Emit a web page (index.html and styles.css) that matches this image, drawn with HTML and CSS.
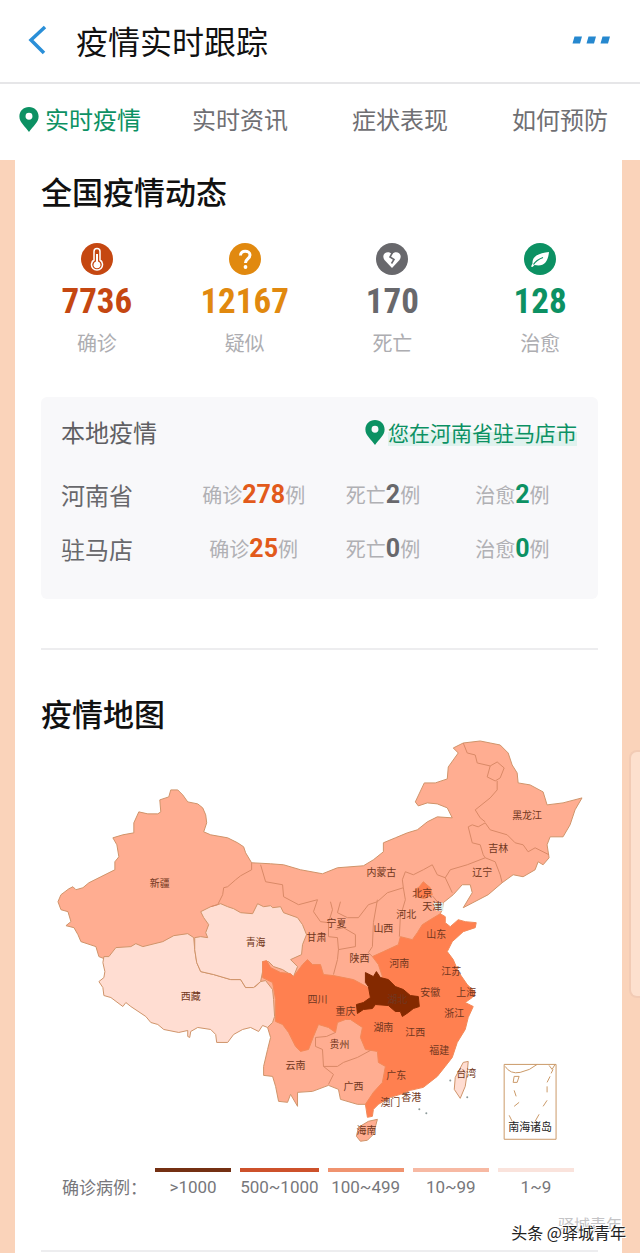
FILE: index.html
```html
<!DOCTYPE html>
<html lang="zh-CN">
<head>
<meta charset="utf-8">
<meta name="viewport" content="width=device-width, initial-scale=1">
<title>疫情实时跟踪</title>
<link rel="stylesheet" href="styles.css">
</head>
<body>
<svg class="defs" aria-hidden="true">
  <symbol id="pin" viewBox="0 0 20 26"><path fill="currentColor" fill-rule="evenodd" d="M10 0C4.300 0 0 4.300 0 9.800C0 16 6 20 10 26C14 20 20 16 20 9.800C20 4.300 15.700 0 10 0ZM10 6a3.600 3.600 0 1 1 0 7.200a3.600 3.600 0 0 1 0-7.200Z"/></symbol>
</svg>
<header class="topbar">
  <button class="icon-btn" aria-label="返回"><svg width="20" height="30" viewBox="0 0 20 30"><path d="M17 2L3 15L16 28" fill="none" stroke="#2a8fd8" stroke-width="3.500"/></svg></button>
  <h1 class="title">疫情实时跟踪</h1>
  <button class="icon-btn" aria-label="更多"><svg width="38" height="8" viewBox="0 0 38 8"><path fill="#2688cf" d="M2.500 0.500h7.500l-2 7H.500zM16.500 0.500h7.500l-2 7h-7.500zM30.500 0.500h7.500l-2 7h-7.500z"/></svg></button>
</header>
<nav class="tabs">
  <a class="tab tab-active" href="#live"><svg class="pin"><use href="#pin"/></svg>实时疫情</a>
  <a class="tab" href="#news">实时资讯</a>
  <a class="tab" href="#symptoms">症状表现</a>
  <a class="tab" href="#prevent">如何预防</a>
</nav>
<main class="card" id="live">
  <h2 class="heading">全国疫情动态</h2>
  <section class="stats">
    <div class="stat red">
      <svg class="badge" viewBox="0 0 32 32"><circle cx="16" cy="16" r="16" fill="currentColor"/><path d="M13 17V8.500a3 3 0 0 1 6 0V17a5.500 5.500 0 1 1-6 0z" fill="none" stroke="#fff" stroke-width="1.500"/><path d="M15 11h2v7.500a3.500 3.500 0 1 1-2 0z" fill="#fff"/></svg>
      <strong class="num">7736</strong><span class="name">确诊</span>
    </div>
    <div class="stat amber">
      <svg class="badge" viewBox="0 0 32 32"><circle cx="16" cy="16" r="16" fill="currentColor"/><path d="M11.500 12.500c0-6 9.500-5.500 9.500-.5c0 4-4.500 3.500-4.500 8" fill="none" stroke="#fff" stroke-width="3"/><circle cx="16.500" cy="24" r="1.900" fill="#fff"/></svg>
      <strong class="num">12167</strong><span class="name">疑似</span>
    </div>
    <div class="stat gray">
      <svg class="badge" viewBox="0 0 32 32"><circle cx="16" cy="16" r="16" fill="currentColor"/><path d="M16 25L8.500 17C4.500 11 11.500 6.500 16 11C20.500 6.500 27.500 11 23.500 17Z" fill="#fff"/><path d="M16.500 9.500L14 14l4 2.500l-2.500 4" fill="none" stroke="currentColor" stroke-width="1.600"/></svg>
      <strong class="num">170</strong><span class="name">死亡</span>
    </div>
    <div class="stat green">
      <svg class="badge" viewBox="0 0 32 32"><circle cx="16" cy="16" r="16" fill="currentColor"/><path d="M25 9C17 10 8 12 8.500 20.500L7 23.500l1.500.5l2-2C20 24 24 19 25 9Z" fill="#fff"/><path d="M9.500 21.500C12 17.500 15 16 19 14.500" fill="none" stroke="currentColor" stroke-width="1.200"/></svg>
      <strong class="num">128</strong><span class="name">治愈</span>
    </div>
  </section>
  <section class="local">
    <div class="local-head">
      <h3 class="local-title">本地疫情</h3>
      <a class="place" href="#place"><svg class="pin"><use href="#pin"/></svg><span class="place-name">您在河南省驻马店市</span></a>
    </div>
    <table class="cases">
      <tr><th scope="row">河南省</th><td>确诊<b class="orange">278</b>例</td><td>死亡<b class="gray">2</b>例</td><td>治愈<b class="green">2</b>例</td></tr>
      <tr><th scope="row">驻马店</th><td>确诊<b class="orange">25</b>例</td><td>死亡<b class="gray">0</b>例</td><td>治愈<b class="green">0</b>例</td></tr>
    </table>
  </section>
  <hr class="rule">
  <h2 class="heading">疫情地图</h2>
  <svg class="map" viewBox="40 738 558 408" role="img" aria-label="疫情地图">
    <path class="mid" d="M170 790L177 790L182 795L187 802L197 804L202 808L205 815L206 823L203 832L210 835L227 838L237 843L243 847L245 853L251 863L270 864L283 865L300 870L322 874L337 868L363 866L373 860L383 852L383 843L395 838L407 833L417 830L427 822L437 817L452 818L447 808L437 804L427 803L418 806L415 802L424 783L435 783L447 779L448 767L458 753L453 748L463 743L480 741L490 743L500 745L508 753L512 765L517 773L518 783L530 785L543 792L547 805L563 803L582 798L575 810L570 825L563 837L550 837L547 845L549 858L543 865L538 862L535 870L523 877L513 875L502 883L488 895L463 908L472 893L470 885L462 885L453 895L443 903L442 910L440 914L430 960L400 1060L373 1100L365 1105L357 1105L340 1100L338 1090L328 1086L312 1092L297 1093L297 1107L290 1095L287 1103L278 1102L275 1087L272 1077L263 1076L263 1067L267 1050L270 1038L267 1028L272 1010L200 960L103 959L98 957L95 947L80 942L77 935L73 928L65 926L70 922L67 912L60 910L57 902L60 895L68 889L72 887L75 890L82 888L88 883L100 877L114 870L114 862L118 857L116 845L112 838L122 835L133 833L133 823L138 812L147 814L157 814L160 812L159 800L168 797Z"/>
    <path class="pale" d="M103 957L108 957L115 948L130 947L135 944L142 947L162 942L173 936L187 934L193 938L194 950L196 963L200 972L213 975L230 980L240 980L245 988L255 987L260 982L265 981L272 990L273 1000L274 1017L272 1023L267 1028L262 1026L258 1032L250 1028L242 1030L233 1035L227 1043L216 1043L215 1035L210 1030L197 1028L190 1032L189 1038L187 1037L187 1031L178 1033L163 1030L157 1025L150 1023L145 1017L130 1007L125 1003L122 1007L110 998L103 996L102 988L98 982L103 978L104 972L102 963Z"/>
    <path class="pale" d="M200 912L210 907L220 904L227 907L233 909L240 913L252 914L257 904L263 907L270 906L272 908L280 907L283 913L297 918L302 925L306 935L302 945L301 955L290 960L297 967L293 977L282 970L273 967L268 962L262 962L262 972L260 982L253 988L245 988L240 980L230 980L213 975L200 972L196 963L194 950L194 938L200 937L207 938L205 933L208 925L203 918Z"/>
    <path class="strong" d="M262 962L266 961L270 968L280 973L290 974L293 977L302 965L307 960L312 965L320 965L323 975L333 976L353 980L368 988L382 977L378 965L372 957L383 952L398 945L400 937L412 940L417 933L422 925L430 920L440 914L445 917L445 923L450 927L458 920L465 922L476 923L475 928L463 932L452 942L447 952L453 960L458 972L467 985L475 993L472 998L465 1003L473 1007L468 1018L465 1030L457 1043L452 1058L445 1067L437 1077L423 1088L410 1091L400 1095L390 1098L378 1105L373 1110L372 1117L367 1118L365 1105L373 1093L382 1083L385 1067L378 1063L377 1052L365 1050L360 1038L362 1028L350 1020L345 1020L337 1023L335 1033L328 1028L318 1025L313 1037L308 1050L300 1052L295 1047L288 1033L282 1025L275 1022L275 1000L272 983L262 978Z"/>
    <path class="strong" d="M415 890L419 887L423 882L430 888L432 895L424 899L416 897Z"/>
    <path class="dark" d="M365 973L373 977L376 972L380 978L388 980L395 987L403 990L410 996L418 997L419 1007L413 1009L408 1013L402 1017L400 1012L395 1012L388 1006L375 1005L372 1009L363 1010L357 1014L356 1005L363 1003L370 998L368 987L365 983Z"/>
    <path class="border" d="M251 863L251 870L240 876L235 880L227 887L223 888L222 895L217 905L210 907M463 743L467 753L475 755L477 763L490 766L497 762L504 768L500 778L495 781L487 777L490 766M497 781L497 790L490 798L475 810L480 818L485 822M468 827L472 825L478 827L485 823L490 830L507 835L515 843L523 845L528 852L535 848L549 855M468 827L472 843L480 845L483 855L485 858L495 862L500 875L502 883M485 858L467 865L450 870L445 878L452 893M445 878L437 875L432 865L423 870L413 875L405 872L402 880L403 888L387 893L377 902L368 905L358 918L347 918L337 913L340 902M377 900L373 923L372 947L368 953L372 957M403 888L405 900L400 917L399 937M260 865L265 882L282 885L283 897L298 905L317 900L313 912L320 922L328 923L332 910L330 902M328 923L328 937L337 938L338 950L355 947L355 935L343 928L335 930M338 950L337 960L333 975M335 1033L326 1037L315 1038L315 1047L322 1050L323 1067L337 1067L343 1063L357 1058L370 1051M323 1067L333 1075L328 1085M432 896L438 903"/>
    <path class="mid" d="M377 1120L368 1122L358 1128L356 1137L360 1142L367 1141L373 1135Z"/>
    <path class="pale" d="M468 1062L463 1063L455 1078L454 1090L460 1099L465 1087L467 1073Z"/>
    <path class="sea" d="M433 903h10v8h-7z"/>
    <g class="islet"><circle cx="450" cy="1081" r="1"/><circle cx="467" cy="1098" r="1"/><circle cx="419" cy="1110" r="1"/><circle cx="426" cy="1114" r="1"/></g>
    <path class="inset" d="M504 1065H556V1140H504ZM505 1067Q510 1075 520 1073Q530 1071 537 1065M514 1077L519 1077L517 1083L513 1083ZM549 1066L552 1070L555 1065M553 1070L551 1074M550 1077L547 1083M547 1087V1093M547 1101L543 1107M539 1115L535 1122M514 1091L516 1097M519 1103L514 1107M509 1116L512 1122"/>
    <g class="labels">
      <text x="159" y="887">新疆</text><text x="255" y="946">青海</text><text x="190" y="1000">西藏</text><text x="316" y="941">甘肃</text><text x="336" y="927">宁夏</text><text x="381" y="876">内蒙古</text><text x="527" y="819">黑龙江</text><text x="498" y="852">吉林</text><text x="482" y="876">辽宁</text><text x="422" y="897">北京</text><text x="432" y="910">天津</text><text x="406" y="918">河北</text><text x="383" y="932">山西</text><text x="436" y="938">山东</text><text x="359" y="962">陕西</text><text x="399" y="967">河南</text><text x="451" y="975">江苏</text><text x="430" y="996">安徽</text><text x="466" y="996">上海</text><text x="397" y="1003">湖北</text><text x="317" y="1003">四川</text><text x="345" y="1015">重庆</text><text x="454" y="1018">浙江</text><text x="383" y="1032">湖南</text><text x="415" y="1037">江西</text><text x="439" y="1055">福建</text><text x="339" y="1049">贵州</text><text x="295" y="1070">云南</text><text x="353" y="1091">广西</text><text x="396" y="1080">广东</text><text x="390" y="1107">澳门</text><text x="411" y="1102">香港</text><text x="466" y="1078">台湾</text><text x="366" y="1135">海南</text><text class="inset-name" x="530" y="1132">南海诸岛</text>
    </g>
  </svg>
  <div class="legend">
    <span class="legend-title">确诊病例：</span>
    <ul class="scale">
      <li class="step step-1">&gt;1000</li><li class="step step-2">500~1000</li><li class="step step-3">100~499</li><li class="step step-4">10~99</li><li class="step step-5">1~9</li>
    </ul>
  </div>
  <hr class="rule">
</main>
<aside class="drawer"></aside>
<div class="mark mark-back">驿城青年</div>
<div class="mark">头条 @驿城青年</div>
</body>
</html>
```
FILE: styles.css
```css
* { box-sizing: border-box; }
body {
  position: relative;
  margin: 0;
  background: #fad3ba;
  color: #111;
  font-family: "Noto Sans CJK SC", sans-serif;
}
h1, h2, h3, ul { margin: 0; padding: 0; }
a { color: inherit; text-decoration: none; }
.defs { position: absolute; width: 0; height: 0; }

.topbar {
  display: flex;
  align-items: center;
  gap: 28px;
  height: 84px;
  padding: 0 30px 2px 28px;
  background: #fff;
  border-bottom: 2px solid #e6e6e8;
}
.icon-btn { display: flex; padding: 0; border: 0; background: none; }
.title { flex: 1; font-size: 32px; line-height: 48px; font-weight: 400; }

.tabs {
  display: grid;
  grid-template-columns: repeat(4, 1fr);
  height: 76px;
  background: #fff;
  color: #6f6f73;
}
.tab {
  display: flex;
  align-items: center;
  justify-content: center;
  gap: 6px;
  padding-bottom: 6px;
  font-size: 24px;
  line-height: 36px;
}
.tab-active { color: #0c9163; }
.pin { flex: none; width: 20px; height: 25px; }

.card { margin: 0 18px 0 15px; padding: 8px 24px 2px 26px; background: #fff; }
.heading { font-size: 31px; line-height: 46px; font-weight: 500; }

.stats {
  display: grid;
  grid-template-columns: repeat(4, 1fr);
  margin: 29px -16px 40px -18px;
}
.stat { display: flex; flex-direction: column; align-items: center; }
.badge { width: 32px; height: 32px; }
.num {
  font-family: "Liberation Sans Narrow", "Roboto Condensed", Roboto, sans-serif;
  font-size: 35px;
  line-height: 54px;
}
.name { color: #adadb1; font-size: 20px; line-height: 28px; }
.red { color: #c54711; }
.amber { color: #e1890f; }
.orange { color: #e25a1b; }
.gray { color: #68686c; }
.green { color: #0c9163; }

.local { padding: 17px 21px 24px 20px; border-radius: 6px; background: #f8f8fa; }
.local-head { display: flex; align-items: center; justify-content: space-between; margin-bottom: 17px; }
.local-title { color: #5f5f63; font-size: 24px; line-height: 36px; font-weight: 400; }
.place { display: flex; align-items: center; gap: 3px; color: #0c9163; font-size: 21px; line-height: 28px; }
.place-name { background: linear-gradient(transparent 50%, #e0f2ee 50%); }
.cases { width: 100%; table-layout: fixed; border-collapse: collapse; }
.cases th, .cases td { height: 54px; padding: 0; white-space: nowrap; }
.cases th { width: 128px; color: #68686c; font-size: 24px; font-weight: 400; text-align: left; }
.cases td { color: #b0b0b4; font-size: 20px; text-align: center; }
.cases b { font-family: Roboto, sans-serif; font-size: 25px; }

.rule { height: 2px; margin: 0; border: 0; background: #ededef; }
.local + .rule { margin: 49px 0 40px; }

.map { display: block; width: 100%; margin-top: 2px; margin-bottom: 23px; }
.mid, .pale, .strong, .dark { stroke: #cf9469; stroke-width: 1; stroke-linejoin: round; }
.mid { fill: #ffad91; }
.pale { fill: #ffddd2; }
.strong { fill: #ff8050; stroke: #f28a58; }
.dark { fill: #842900; stroke: #842900; }
.border { fill: none; stroke: #d98966; stroke-width: 1; }
.sea { fill: #d8ece8; }
.islet { fill: #8d9a9a; }
.inset { fill: none; stroke: #cb9a68; stroke-width: 1; }
.labels { fill: #713720; font-size: 10px; text-anchor: middle; }
.inset-name { fill: #222; font-size: 11px; }

.legend { display: flex; align-items: flex-end; padding: 0 24px 0 21px; margin-bottom: 50px; color: #77777b; }
.legend-title { flex: none; width: 93px; font-size: 17px; line-height: 26px; }
.scale { display: grid; flex: 1; grid-template-columns: repeat(5, 1fr); gap: 9px; list-style: none; }
.step {
  display: flex;
  justify-content: center;
  border-top: 4px solid;
  padding-top: 2px;
  font-size: 17px;
  line-height: 26px;
  font-family: Roboto, sans-serif;
}
.step-1 { border-color: #743013; }
.step-2 { border-color: #cd512b; }
.step-3 { border-color: #f0936f; }
.step-4 { border-color: #f7b9a3; }
.step-5 { border-color: #fae3dc; }

.drawer {
  position: absolute;
  top: 750px;
  right: 0;
  width: 11px;
  height: 248px;
  border: 2px solid #f2cbb5;
  border-right: 0;
  border-radius: 8px 0 0 8px;
  background: #fde0ce;
}
.mark {
  position: absolute;
  right: 14px;
  bottom: 10px;
  color: #222;
  font-size: 16px;
  line-height: 24px;
  text-shadow: 1px 1px #fff, -1px -1px #fff;
}
.mark-back { right: 18px; bottom: 18px; color: #c4c4c6; }
```
